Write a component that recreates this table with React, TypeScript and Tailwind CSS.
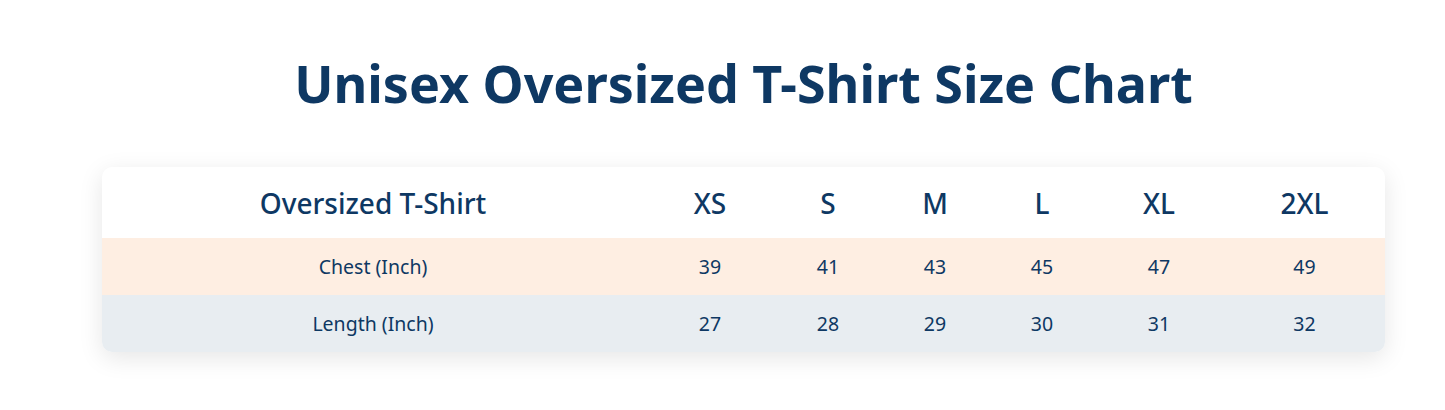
import React from "react";

const sizes = ["XS", "S", "M", "L", "XL", "2XL"];

const rows = [
  { label: "Chest (Inch)", values: [39, 41, 43, 45, 47, 49], bg: "bg-[#feeee2]" },
  { label: "Length (Inch)", values: [27, 28, 29, 30, 31, 32], bg: "bg-[#e8edf1]" },
];

const gridCols = "grid grid-cols-[542px_132px_104px_110px_104px_130px_161px]";

const App = () => {
  return (
    <div className="w-[1445px] h-[410px] bg-white font-['Noto_Sans',sans-serif] text-[#0e3863]">
      <div className="ml-[42px] w-[1403px]">
        {/* Title */}
        <div className="pt-[49px] flex justify-center">
          <h1 className="text-[52px] leading-[68px] font-bold">
            Unisex Oversized T-Shirt Size Chart
          </h1>
        </div>

        {/* Table card */}
        <div className="mt-[50px] mx-[60px] rounded-[10px] overflow-hidden bg-white shadow-[0_6px_24px_rgba(0,0,0,0.10)]">
          <div className={`${gridCols} h-[71px] items-center text-center text-[28px] font-medium`}>
            <div>Oversized T-Shirt</div>
            {sizes.map((s) => (
              <div key={s}>{s}</div>
            ))}
          </div>

          {rows.map((row) => (
            <div
              key={row.label}
              className={`${gridCols} ${row.bg} h-[57px] items-center text-center text-[19.5px]`}
            >
              <div>{row.label}</div>
              {row.values.map((v, i) => (
                <div key={i}>{v}</div>
              ))}
            </div>
          ))}
        </div>
      </div>
    </div>
  );
};

export default App;
